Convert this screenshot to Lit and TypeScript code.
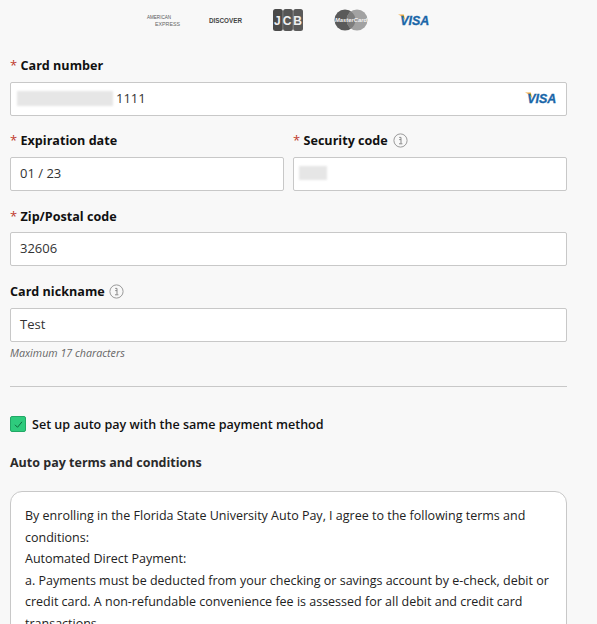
import { LitElement, html, css } from "lit";
import { customElement } from "lit/decorators.js";

const visa = (w: number) => html`<svg class="visa" width=${w} viewBox="0 0 32 12" height=${(w * 12) / 32} aria-label="Visa">
  <path d="M0 0.6 H5.8 L7.4 6.8 C6 3.8 3 1.6 0 0.6Z" fill="#f2a93b"/>
  <text x="2.2" y="11.2" font-family="'Liberation Sans',sans-serif" font-weight="700" font-style="italic" font-size="13.4" fill="#1a66a8" stroke="#1a66a8" stroke-width="0.35" textLength="29" lengthAdjust="spacingAndGlyphs">VISA</text>
</svg>`;

const info = html`<svg class="info" width="15" height="15" viewBox="0 0 15 15" aria-hidden="true">
  <circle cx="7.5" cy="7.5" r="6.6" fill="none" stroke="#9a9a9a" stroke-width="1"/>
  <path d="M6.2 4.4 H8 V10.6 M6 10.8 H9.4 M6.2 6.6 H8" fill="none" stroke="#8a8a8a" stroke-width="1"/>
</svg>`;

@customElement("app-root")
export class AppRoot extends LitElement {
  static styles = css`
    :host {
      display: block;
      width: 597px;
      height: 624px;
      overflow: hidden;
      background: #f8f8f8;
      font-family: "Open Sans", sans-serif;
      color: #1a1a1a;
      font-size: 13px;
    }
    .wrap {
      padding: 0 30px 0 10px;
      display: flex;
      flex-direction: column;
    }
    .logos {
      height: 40px;
      display: flex;
      align-items: center;
      margin-left: 137px;
    }
    .logos svg {
      display: block;
      flex: none;
      overflow: visible;
    }
    .visa { overflow: visible; }
    .amex { margin-right: 29px; }
    .disc { margin-right: 31px; }
    .jcb { margin-right: 31px; }
    .mc { margin-right: 30px; }
    .label {
      display: flex;
      align-items: center;
      height: 20px;
      font-weight: 700;
      font-size: 12.6px;
      color: #111;
      margin-bottom: 7px;
    }
    .label.low {
      margin-top: 1px;
      margin-bottom: 6px;
    }
    .req {
      color: #c0392b;
      font-size: 13px;
      margin-right: 3.5px;
      font-weight: 400;
      width: 7px;
    }
    .info { margin-left: 4px; }
    .sec .info { margin-left: 5px; }
    .input {
      box-sizing: border-box;
      height: 34px;
      background: #fff;
      border: 1px solid #c8c8c8;
      border-radius: 2px;
      display: flex;
      align-items: center;
      padding: 0 9px 2px;
      font-size: 13px;
      color: #333;
    }
    .masked {
      background: #e6e6e6;
      filter: blur(1px);
      flex: none;
    }
    .card-mask { width: 96px; height: 15px; margin-left: -3px; margin-right: 3px; }
    .cvv-mask { width: 28px; height: 14px; margin-left: -4px; }
    .grow { flex: 1; }
    .field { margin-bottom: 15px; }
    .row {
      display: grid;
      grid-template-columns: 274px 274px;
      gap: 9px;
    }
    .row .field { margin-bottom: 14px; }
    .tight { margin-bottom: 14px; }
    .first { margin-top: 15px; }
    .hint {
      font-style: italic;
      font-size: 10.7px;
      color: #666;
      margin-top: 4px;
      line-height: 14px;
    }
    hr {
      border: 0;
      border-top: 1px solid #c8c8c8;
      margin: 26px 0 0;
    }
    .check {
      display: flex;
      align-items: center;
      margin-top: 29px;
      height: 16px;
      font-size: 12.55px;
      font-weight: 600;
      color: #111;
    }
    .box {
      width: 16px;
      height: 16px;
      box-sizing: border-box;
      background: #2ecb7d;
      border: 1px solid #22a866;
      border-radius: 2px;
      margin-right: 6px;
      display: flex;
      align-items: center;
      justify-content: center;
    }
    h3 {
      margin: 22px 0 0;
      font-size: 12.5px;
      line-height: 18px;
      font-weight: 700;
      color: #2a2a2a;
    }
    .terms {
      box-sizing: border-box;
      margin-top: 19px;
      height: 200px;
      background: #fff;
      border: 1px solid #c8c8c8;
      border-radius: 12px;
      padding: 13px 14px;
      font-size: 12.5px;
      line-height: 21.5px;
      color: #222;
    }
  `;

  render() {
    return html`<div class="wrap">
      <div class="logos">
        <svg class="amex" width="33" height="14" viewBox="0 0 33 14">
          <text x="0" y="5.5" font-family="'Liberation Sans',sans-serif" font-size="5.4" fill="#555" textLength="24" lengthAdjust="spacingAndGlyphs">AMERICAN</text>
          <text x="8" y="12.5" font-family="'Liberation Sans',sans-serif" font-size="5.4" fill="#666" textLength="25" lengthAdjust="spacingAndGlyphs">EXPRESS</text>
        </svg>
        <svg class="disc" width="33" height="10" viewBox="0 0 33 10">
          <text x="0" y="8" font-family="'Liberation Sans',sans-serif" font-weight="700" font-size="7" fill="#444" textLength="33" lengthAdjust="spacingAndGlyphs">DISCOVER</text>
        </svg>
        <svg class="jcb" width="30" height="24" viewBox="0 0 30 24">
          <rect x="0" y="1" width="9.8" height="22" rx="2.5" fill="#4a4a4a"/>
          <rect x="10.1" y="1" width="9.8" height="22" rx="2.5" fill="#555"/>
          <rect x="20.2" y="1" width="9.8" height="22" rx="2.5" fill="#5a5a5a"/>
          <text x="1" y="17" font-family="'Liberation Sans',sans-serif" font-weight="700" font-size="12" fill="#f0f0f0" textLength="28" lengthAdjust="spacing">JCB</text>
        </svg>
        <svg class="mc" width="34" height="22" viewBox="0 0 34 22">
          <circle cx="11" cy="11" r="10.5" fill="#5a5a5a"/>
          <circle cx="23" cy="11" r="10.5" fill="#a2a2a2"/>
          <path d="M17 2.4 a10.5 10.5 0 0 1 0 17.2 a10.5 10.5 0 0 1 0-17.2Z" fill="#7d7d7d"/>
          <text x="1" y="13" font-family="'Liberation Sans',sans-serif" font-weight="700" font-style="italic" font-size="6" fill="#f4f4f4" textLength="32" lengthAdjust="spacingAndGlyphs">MasterCard</text>
        </svg>
        ${visa(32)}
      </div>

      <div class="field first tight">
        <div class="label"><span class="req">*</span>Card number</div>
        <div class="input"><span class="masked card-mask"></span><span>1111</span><span class="grow"></span>${visa(32)}</div>
      </div>

      <div class="row">
        <div class="field">
          <div class="label"><span class="req">*</span>Expiration date</div>
          <div class="input">01 / 23</div>
        </div>
        <div class="field sec">
          <div class="label"><span class="req">*</span>Security code ${info}</div>
          <div class="input"><span class="masked cvv-mask"></span></div>
        </div>
      </div>

      <div class="field">
        <div class="label low"><span class="req">*</span>Zip/Postal code</div>
        <div class="input">32606</div>
      </div>

      <div>
        <div class="label">Card nickname ${info}</div>
        <div class="input">Test</div>
        <div class="hint">Maximum 17 characters</div>
      </div>

      <hr />

      <div class="check">
        <span class="box"><svg width="11" height="11" viewBox="0 0 11 11"><path d="M2 5.8 L4.5 8.3 L9 2.8" fill="none" stroke="#0f6b3e" stroke-width="1"/></svg></span>
        Set up auto pay with the same payment method
      </div>

      <h3>Auto pay terms and conditions</h3>

      <div class="terms">
        By enrolling in the Florida State University Auto Pay, I agree to the following terms and conditions:<br />
        Automated Direct Payment:<br />
        a. Payments must be deducted from your checking or savings account by e-check, debit or credit card. A non-refundable convenience fee is assessed for all debit and credit card transactions.
      </div>
    </div>`;
  }
}
